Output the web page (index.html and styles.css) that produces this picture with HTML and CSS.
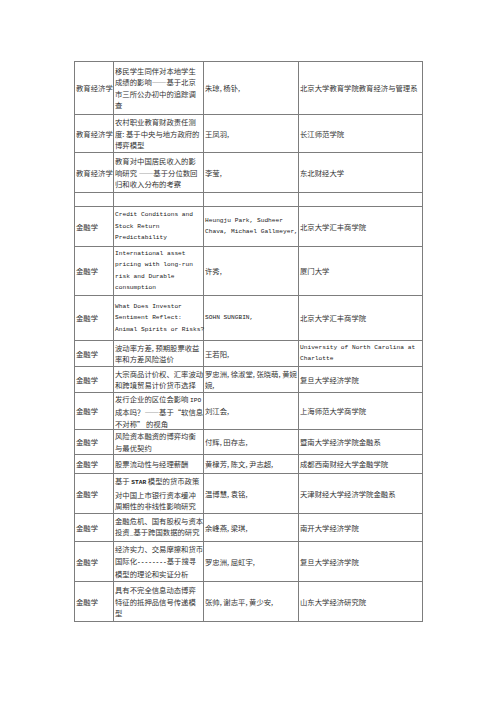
FILE: index.html
```html
<!DOCTYPE html>
<html lang="zh-CN">
<head>
<meta charset="utf-8">
<title>论文列表</title>
<link rel="stylesheet" href="styles.css">
</head>
<body>
<div class="page">
<table class="list">
<colgroup><col class="c1"><col class="c2"><col class="c3"><col class="c4"></colgroup>
<tr class="h53"><td>教育经济学</td><td>移民学生同伴对本地学生<br>成绩的影响——基于北京<br>市三所公办初中的追踪调<br>查</td><td>朱琼, 杨钋,</td><td>北京大学教育学院教育经济与管理系</td></tr>
<tr class="h39"><td>教育经济学</td><td>农村职业教育财政责任测<br>度: 基于中央与地方政府的<br>博弈模型</td><td>王凤羽,</td><td>长江师范学院</td></tr>
<tr class="h40"><td>教育经济学</td><td>教育对中国居民收入的影<br>响研究 ——基于分位数回<br>归和收入分布的考察</td><td>李莹,</td><td>东北财经大学</td></tr>
<tr class="h15"><td></td><td></td><td></td><td></td></tr>
<tr class="h40"><td>金融学</td><td class="en">Credit Conditions and<br>Stock Return<br>Predictability</td><td class="en">Heungju Park, Sudheer<br>Chava, Michael Gallmeyer,</td><td>北京大学汇丰商学院</td></tr>
<tr class="h50"><td>金融学</td><td class="en">International asset<br>pricing with long-run<br>risk and Durable<br>consumption</td><td>许秀,</td><td>厦门大学</td></tr>
<tr class="h45"><td>金融学</td><td class="en">What Does Investor<br>Sentiment Reflect:<br>Animal Spirits or Risks?</td><td class="en">SOHN SUNGBIN,</td><td>北京大学汇丰商学院</td></tr>
<tr class="h27"><td>金融学</td><td>波动率方差, 预期股票收益<br>率和方差风险溢价</td><td>王若阳,</td><td class="en">University of North Carolina at<br>Charlotte</td></tr>
<tr class="h26"><td>金融学</td><td>大宗商品计价权、汇率波动<br>和跨境贸易计价货币选择</td><td>罗忠洲, 徐淑堂, 张晓萌, 黄婉<br>婉,</td><td>复旦大学经济学院</td></tr>
<tr class="h36"><td>金融学</td><td>发行企业的区位会影响 <span class="en">IPO</span><br>成本吗？——基于“软信息<br>不对称” 的视角</td><td>刘江会,</td><td>上海师范大学商学院</td></tr>
<tr class="h25"><td>金融学</td><td>风险资本融资的博弈均衡<br>与最优契约</td><td>付辉, 田存志,</td><td>暨南大学经济学院金融系</td></tr>
<tr class="h20"><td>金融学</td><td>股票流动性与经理薪酬</td><td>黄棣芳, 陈文, 尹志超,</td><td>成都西南财经大学金融学院</td></tr>
<tr class="h40"><td>金融学</td><td>基于 <span class="en b">STAR</span> 模型的货币政策<br>对中国上市银行资本缓冲<br>周期性的非线性影响研究</td><td>温博慧, 袁铭,</td><td>天津财经大学经济学院金融系</td></tr>
<tr class="h29"><td>金融学</td><td>金融危机、国有股权与资本<br>投资<span class="en b">_</span>基于跨国数据的研究</td><td>余峰燕, 梁琪,</td><td>南开大学经济学院</td></tr>
<tr class="h40"><td>金融学</td><td>经济实力、交易摩擦和货币<br>国际化<span class="en b">--------</span>基于搜寻<br>模型的理论和实证分析</td><td>罗忠洲, 屈虹宇,</td><td>复旦大学经济学院</td></tr>
<tr class="h41"><td>金融学</td><td>具有不完全信息动态博弈<br>特征的抵押品信号传递模<br>型</td><td>张帅, 谢志平, 黄少安,</td><td>山东大学经济研究院</td></tr>
</table>
</div>
</body>
</html>
```
FILE: styles.css
```css
html, body {
  margin: 0;
  padding: 0;
  background: #ffffff;
}
.page {
  padding: 61px 0 0 74px;
}
.list {
  border-collapse: collapse;
  table-layout: fixed;
  width: 348px;
  font-family: "Noto Sans CJK SC", "Liberation Serif", serif;
  font-size: 7.35px;
  line-height: 11.5px;
  color: #333333;
}
.c1 { width: 39px; }
.c2 { width: 90px; }
.c3 { width: 95px; }
.c4 { width: 124px; }
.list td {
  border: 1px solid #7d7d7d;
  padding: 0 1px;
  vertical-align: middle;
  text-align: left;
  white-space: nowrap;
  overflow: visible;
}
.en {
  font-family: "Liberation Mono", "DejaVu Sans Mono", monospace;
  font-size: 6.2px;
  color: #1a1a1a;
}
.b { font-weight: bold; }
.h53 { height: 52.5px; }
.h50 { height: 49.5px; }
.h45 { height: 44.5px; }
.h41 { height: 40.5px; }
.h40 { height: 39.5px; }
.h39 { height: 38.5px; }
.h36 { height: 35.5px; }
.h29 { height: 28.5px; }
.h27 { height: 26.5px; }
.h26 { height: 25.5px; }
.h25 { height: 24.5px; }
.h20 { height: 19.5px; }
.h15 { height: 14.5px; }
```
